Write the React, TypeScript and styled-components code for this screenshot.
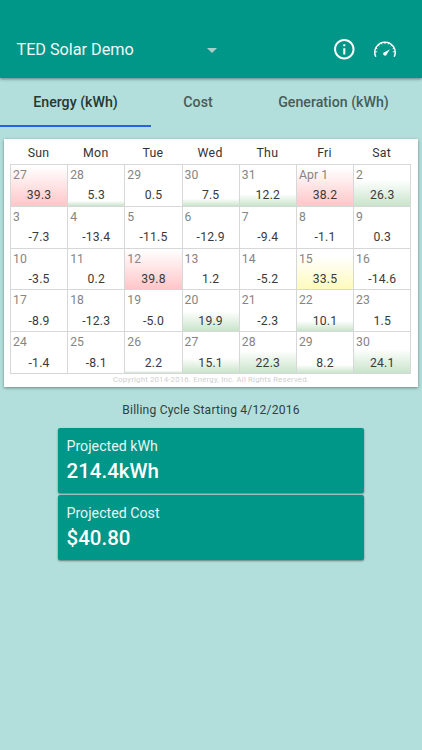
import React from 'react';
import styled, { createGlobalStyle } from 'styled-components';

type Tone = 'red' | 'green' | 'yellow';

interface Day {
  label: string;
  value: number;
  tone?: Tone;
}

const TONES: Record<Tone, string> = {
  red: '#ffc6c8',
  green: '#c9e4ca',
  yellow: '#fffabd',
};

const WEEKDAYS = ['Sun', 'Mon', 'Tue', 'Wed', 'Thu', 'Fri', 'Sat'];

const DAYS: Day[] = [
  { label: '27', value: 39.3, tone: 'red' },
  { label: '28', value: 5.3, tone: 'green' },
  { label: '29', value: 0.5 },
  { label: '30', value: 7.5, tone: 'green' },
  { label: '31', value: 12.2, tone: 'green' },
  { label: 'Apr 1', value: 38.2, tone: 'red' },
  { label: '2', value: 26.3, tone: 'green' },
  { label: '3', value: -7.3 },
  { label: '4', value: -13.4 },
  { label: '5', value: -11.5 },
  { label: '6', value: -12.9 },
  { label: '7', value: -9.4 },
  { label: '8', value: -1.1 },
  { label: '9', value: 0.3 },
  { label: '10', value: -3.5 },
  { label: '11', value: 0.2 },
  { label: '12', value: 39.8, tone: 'red' },
  { label: '13', value: 1.2 },
  { label: '14', value: -5.2 },
  { label: '15', value: 33.5, tone: 'yellow' },
  { label: '16', value: -14.6 },
  { label: '17', value: -8.9 },
  { label: '18', value: -12.3 },
  { label: '19', value: -5.0 },
  { label: '20', value: 19.9, tone: 'green' },
  { label: '21', value: -2.3 },
  { label: '22', value: 10.1, tone: 'green' },
  { label: '23', value: 1.5 },
  { label: '24', value: -1.4 },
  { label: '25', value: -8.1 },
  { label: '26', value: 2.2, tone: 'green' },
  { label: '27', value: 15.1, tone: 'green' },
  { label: '28', value: 22.3, tone: 'green' },
  { label: '29', value: 8.2, tone: 'green' },
  { label: '30', value: 24.1, tone: 'green' },
];

const InfoIcon: React.FC = () => (
  <svg width="24.6" height="24.6" viewBox="0 0 24 24" fill="#fff">
    <path d="M11 17h2v-6h-2v6zm1-15C6.48 2 2 6.48 2 12s4.48 10 10 10 10-4.48 10-10S17.52 2 12 2zm0 18c-4.41 0-8-3.59-8-8s3.59-8 8-8 8 3.59 8 8-3.59 8-8 8zM11 9h2V7h-2v2z" />
  </svg>
);

const GaugeIcon: React.FC = () => (
  <svg width="24" height="18" viewBox="0 0 24 18" fill="none" stroke="#fff">
    <path d="M2.8 16.8A10.2 10.2 0 1 1 21.2 16.8" strokeWidth="1.5" />
    <path
      d="M2 11.8h2.2M22 11.8h-2.2M5 4.8l1.4 1.4M19 4.8l-1.4 1.4M12 2v2.2M8.2 2.7l.7 1.8M15.8 2.7l-.7 1.8M2.6 8.2l1.8.7M21.4 8.2l-1.8.7"
      strokeWidth="0.9"
    />
    <path d="M17 9.2l-3.1 4.9a1.9 1.9 0 1 1-2-2.2z" fill="#fff" stroke="none" />
  </svg>
);

const App: React.FC = () => {
  return (
    <Screen>
      <GlobalStyle />
      <Toolbar>
        <SystemPicker>
          <Title>TED Solar Demo</Title>
          <Caret />
        </SystemPicker>
        <Actions>
          <InfoIcon />
          <GaugeIcon />
        </Actions>
      </Toolbar>
      <Tabs>
        <Tab $width={151} $active>
          Energy (kWh)
        </Tab>
        <Tab $width={94}>Cost</Tab>
        <Tab $width={177}>Generation (kWh)</Tab>
      </Tabs>
      <CalendarCard>
        <Weekdays>
          {WEEKDAYS.map((name) => (
            <Weekday key={name}>{name}</Weekday>
          ))}
        </Weekdays>
        <Grid>
          {DAYS.map((day, index) => (
            <Cell key={index} $tone={day.tone} $level={day.value}>
              <DayLabel>{day.label}</DayLabel>
              <DayValue>{day.value.toFixed(1)}</DayValue>
            </Cell>
          ))}
        </Grid>
        <Copyright>Copyright 2014-2016. Energy, Inc. All Rights Reserved.</Copyright>
      </CalendarCard>
      <BillingCycle>Billing Cycle Starting 4/12/2016</BillingCycle>
      <Projections>
        <ProjectionCard>
          <ProjectionLabel>Projected kWh</ProjectionLabel>
          <ProjectionValue>214.4kWh</ProjectionValue>
        </ProjectionCard>
        <ProjectionCard>
          <ProjectionLabel>Projected Cost</ProjectionLabel>
          <ProjectionValue>$40.80</ProjectionValue>
        </ProjectionCard>
      </Projections>
    </Screen>
  );
};

export default App;

const GlobalStyle = createGlobalStyle`
  * {
    box-sizing: border-box;
  }

  body {
    margin: 0;
    background: #b2dfdb;
    font-family: Roboto, sans-serif;
  }
`;

const Screen = styled.div`
  display: flex;
  flex-direction: column;
  width: 422px;
  height: 750px;
  overflow: hidden;
  background: #b2dfdb;
`;

const Toolbar = styled.header`
  display: flex;
  justify-content: space-between;
  flex-shrink: 0;
  height: 78px;
  padding: 37px 25px 0 16.5px;
  background: #009688;
  box-shadow: 0 1px 3px rgba(0, 0, 0, 0.45);
`;

const SystemPicker = styled.div`
  display: flex;
  align-items: center;
  justify-content: space-between;
  width: 200.5px;
  height: 24px;
`;

const Title = styled.div`
  font-size: 16.3px;
  letter-spacing: -0.05px;
  color: #eefaf8;
`;

const Caret = styled.span`
  margin-top: 2px;
  border-top: 5px solid #a9cfc9;
  border-left: 5.5px solid transparent;
  border-right: 5.5px solid transparent;
`;

const Actions = styled.div`
  display: flex;
  align-items: center;
  gap: 16px;
  height: 24px;
`;

const Tabs = styled.nav`
  display: flex;
  flex-shrink: 0;
  height: 49px;
`;

const Tab = styled.div<{ $width: number; $active?: boolean }>`
  display: flex;
  align-items: center;
  justify-content: center;
  width: ${({ $width }) => $width}px;
  border-bottom: 2px solid ${({ $active }) => ($active ? '#2962e8' : 'transparent')};
  font-size: 14.2px;
  font-weight: 500;
  color: ${({ $active }) => ($active ? '#263735' : '#475d5a')};
`;

const CalendarCard = styled.section`
  flex-shrink: 0;
  width: 413.6px;
  height: 248px;
  margin: 12px 0 0 4.2px;
  padding: 0 5.8px;
  background: #fff;
  box-shadow: 0 1px 3px rgba(0, 0, 0, 0.4);
`;

const Weekdays = styled.div`
  display: grid;
  grid-template-columns: repeat(7, 57.2px);
  height: 25px;
`;

const Weekday = styled.div`
  font-size: 12.3px;
  line-height: 28px;
  letter-spacing: 0.3px;
  text-align: center;
  color: #333;
`;

const Grid = styled.div`
  display: grid;
  grid-template-columns: repeat(7, 57.2px);
  grid-auto-rows: 41.8px;
  width: 401.4px;
  height: 210px;
  border-top: 1px solid #d5d7d8;
  border-left: 1px solid #d5d7d8;
`;

const Cell = styled.div<{ $tone?: Tone; $level: number }>`
  border-right: 1px solid #d5d7d8;
  border-bottom: 1px solid #d5d7d8;
  background: ${({ $tone, $level }) =>
    $tone ? `linear-gradient(to top, ${TONES[$tone]}, #fff ${$level}px)` : '#fff'};
`;

const DayLabel = styled.div`
  padding: 2px 0 0 2px;
  font-size: 12.2px;
  line-height: 17px;
  letter-spacing: 0.1px;
  color: #858585;
`;

const DayValue = styled.div`
  padding-top: 3.4px;
  font-size: 12.2px;
  line-height: 17px;
  letter-spacing: 0.2px;
  text-align: center;
  color: #3a3a3a;
`;

const Copyright = styled.div`
  font-size: 7.8px;
  line-height: 12px;
  letter-spacing: 0.18px;
  text-align: center;
  color: #cfcfcf;
`;

const BillingCycle = styled.div`
  height: 41px;
  padding-top: 14px;
  font-size: 12.1px;
  line-height: 18px;
  letter-spacing: 0.2px;
  text-align: center;
  color: #2f413f;
`;

const Projections = styled.div`
  display: flex;
  flex-direction: column;
  gap: 2px;
  width: 306px;
  margin-left: 58px;
`;

const ProjectionCard = styled.div`
  height: 65px;
  padding: 8px 8.5px;
  border-radius: 2px;
  background: #009688;
  box-shadow: 0 1px 2px rgba(0, 0, 0, 0.45);
`;

const ProjectionLabel = styled.div`
  font-size: 14.2px;
  line-height: 20px;
  color: #e3f6f4;
`;

const ProjectionValue = styled.div`
  padding-top: 2px;
  font-size: 20.5px;
  font-weight: 500;
  line-height: 27px;
  color: #fff;
`;
